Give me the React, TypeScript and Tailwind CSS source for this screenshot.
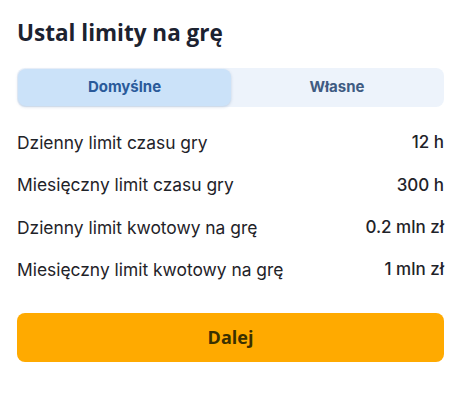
import React from "react";

const rows = [
  ["Dzienny limit czasu gry", "12 h"],
  ["Miesięczny limit czasu gry", "300 h"],
  ["Dzienny limit kwotowy na grę", "0.2 mln zł"],
  ["Miesięczny limit kwotowy na grę", "1 mln zł"],
];

export default function App() {
  return (
    <div className="w-[461px] h-[401px] bg-white px-[17px] pt-[19px] [font-family:Inter,'Noto_Sans',sans-serif]">
      <h1 className="text-[22.5px] leading-[28px] font-bold text-[#1c2230] [font-family:'Open_Sans','Noto_Sans',sans-serif]">
        Ustal limity na grę
      </h1>
      <div className="mt-[21px] h-[39px] rounded-[8px] bg-[#edf3fb] p-px flex">
        <button className="w-[213px] h-full rounded-[8px] bg-[#cbe2f9] shadow-[0_1px_3px_rgba(60,100,150,0.25)] text-[15px] font-bold text-[#2a5a9a]">
          Domyślne
        </button>
        <button className="flex-1 h-full text-[15px] font-bold text-[#3f5b82]">Własne</button>
      </div>
      <div className="mt-[15px] flex flex-col">
        {rows.map(([l, v]) => (
          <div key={l} className="h-[42.3px] flex items-center justify-between text-[#1f2329]">
            <span className="text-[17.4px]">{l}</span>
            <span className="text-[17px] font-medium">{v}</span>
          </div>
        ))}
      </div>
      <button className="mt-[22px] w-full h-[49px] rounded-[8px] bg-[#ffaa00] text-[18px] font-bold text-[#3a3000] [font-family:'Open_Sans','Noto_Sans',sans-serif]">
        Dalej
      </button>
    </div>
  );
}
